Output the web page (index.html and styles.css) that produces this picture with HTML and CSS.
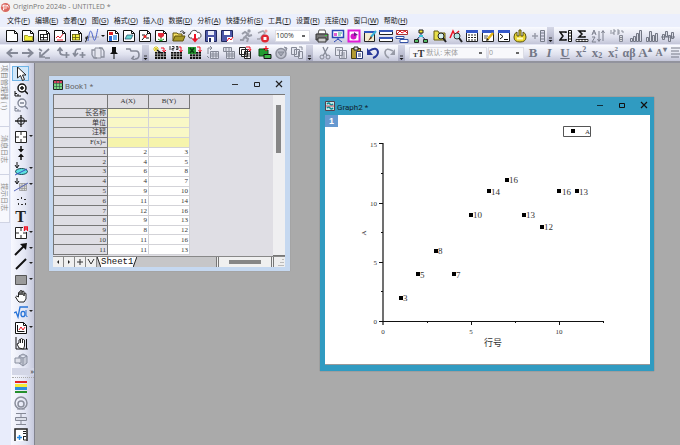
FILE: index.html
```html
<!DOCTYPE html>
<html lang="zh-CN">
<head>
<meta charset="utf-8">
<title>OriginPro 2024b - UNTITLED *</title>
<link rel="stylesheet" href="styles.css">
</head>
<body>
<svg class="defs" aria-hidden="true">
  <symbol id="page" viewBox="0 0 14 14"><path d="M1.500 1.500h8l3 3v8h-11z" fill="#fff" stroke="#111"/><path d="M9.500 1.500v3h3" fill="none" stroke="#111"/></symbol>
  <symbol id="drop" viewBox="0 0 5 14"><path d="M1 6h4l-2 2z" fill="#111"/></symbol>
  <symbol id="calendar" viewBox="0 0 14 14"><path d="M1.500 2.500h11v10h-11z" fill="#fff" stroke="#222"/><path d="M1 1h12v3H1z" fill="#3457c8"/></symbol>
  <symbol id="sheet" viewBox="0 0 14 14"><path d="M2 6h11v7H2z" fill="#111"/><path d="M2 8h11M2 10.500h11M4.500 6v7M7.500 6v7M10.500 6v7" stroke="#bbb" stroke-width=".7"/></symbol>
  <symbol id="graysheet" viewBox="0 0 14 14"><path d="M4.500 5.500h8v7h-8zM4.500 8h8M4.500 10h8M7 5.500v7M10 5.500v7" fill="#dfe1ec" stroke="#858996"/></symbol>
  <symbol id="grip" viewBox="0 0 7 17"><path d="M2 11h3" stroke="#111" stroke-width=".8"/><path d="M1.500 13h4l-2 2z" fill="#111"/></symbol>
  <symbol id="target" viewBox="0 0 14 14"><path d="M1.500 1.500h11v11h-11z" fill="#fff" stroke="#222"/><path d="M7 1v4M7 9v4M1 7h4M9 7h4" stroke="#222"/><path d="M5 5h4v4H5z" fill="#fff"/></symbol>
</svg>

<header class="titlebar">
  <svg class="logo" viewBox="0 0 12 12"><circle cx="6" cy="6" r="5" fill="#d9685f"/><path d="M3 9L9 3M2 5c3-3 6-1 8 1M4 3v6" stroke="#fff" fill="none"/><circle cx="6" cy="6" r="2" fill="#f4aaa2"/></svg>
  <h1>OriginPro 2024b - UNTITLED *</h1>
</header>

<nav class="menubar">
  <a href="#">文件(<u>F</u>)</a><a href="#">编辑(<u>E</u>)</a><a href="#">查看(<u>V</u>)</a><a href="#">图(<u>G</u>)</a><a href="#">格式(<u>O</u>)</a><a href="#">插入(<u>I</u>)</a><a href="#">数据(<u>D</u>)</a><a href="#">分析(<u>A</u>)</a><a href="#">快捷分析(<u>S</u>)</a><a href="#">工具(<u>T</u>)</a><a href="#">设置(<u>R</u>)</a><a href="#">连接(<u>N</u>)</a><a href="#">窗口(<u>W</u>)</a><a href="#">帮助(<u>H</u>)</a>
</nav>

<div class="toolbar" role="toolbar" aria-label="标准">
  <button aria-label="新建项目"><svg viewBox="0 0 14 14"><use href="#page"/></svg></button>
  <button aria-label="新建文件夹"><svg viewBox="0 0 14 14"><use href="#page"/><path d="M3.500 6.500h3l1 1h4v4h-8z" fill="#f2ee3c" stroke="#8a8410" stroke-width=".8"/></svg></button>
  <button aria-label="新建工作簿"><svg viewBox="0 0 14 14"><use href="#page"/><path d="M3 5.500h8M3 8.500h8M3 11h8M3.500 5v6M6.500 5v6M10.500 5v6" stroke="#111" stroke-width=".9"/></svg></button>
  <button aria-label="新建图"><svg viewBox="0 0 14 14"><use href="#page"/><path d="M3 9l2-2 2 2 3-4M4 11h6" fill="none" stroke="#e02030"/></svg></button>
  <button aria-label="新建矩阵"><svg viewBox="0 0 14 14"><use href="#page"/><path d="M3 5h8v6H3z" fill="#f4ee40"/><path d="M3 5.500h8M3 8.500h8M3 11h8M3.500 5v6M6.500 5v6M10.500 5v6" stroke="#5b5810" stroke-width=".8"/></svg></button>
  <button aria-label="新建函数图"><svg viewBox="0 0 14 14"><path d="M0 8h14" stroke="#aaa"/><path d="M3 12c2-13 3-12 5-4s3 0 5-9" fill="none" stroke="#4a62ca"/><path d="M0 13c2 0 1-6 3-6M0 9h3" fill="none" stroke="#111"/></svg></button>
  <button class="drop" aria-label="函数选项"><svg viewBox="0 0 5 14"><use href="#drop"/></svg></button>
  <button aria-label="新建布局"><svg viewBox="0 0 14 14"><use href="#page"/><path d="M3 3h4v3H3z" fill="#d22"/><path d="M3 7h3v5H3z" fill="#2865d0"/><path d="M7 6h4v5H7z" fill="#6aaee8"/></svg></button>
  <button aria-label="新建备注"><svg viewBox="0 0 14 14"><use href="#page"/><path d="M3 10l2-4h6l-2 4z" fill="#69d6d1" stroke="#246" stroke-width=".7"/></svg></button>
  <button aria-label="数字化"><svg viewBox="0 0 14 14"><use href="#page"/><path d="M4 11l6-7M4 6h3M8 9h3" stroke="#111"/><circle cx="7" cy="7.500" r="1.500" fill="#e22"/></svg></button>
  <button class="gap2" aria-label="新建图像"><svg viewBox="0 0 14 14"><use href="#page"/><path d="M7 8v4M4 10l3 2 3-2" stroke="#169a22" fill="none"/><path d="M4 4h6v3L7 9 4 7z" fill="#e02b3b"/></svg></button>
  <button aria-label="打开"><svg viewBox="0 0 14 14"><path d="M1 12V4h4l1 1h4v2" fill="#f4df65" stroke="#61530a"/><path d="M1 12l2-5h10l-2 5z" fill="#a99a28" stroke="#61530a"/><path d="M8 3c2-2 4-1 4 1M10.500 3L12 5l1-2" fill="none" stroke="#111" stroke-width=".8"/></svg></button>
  <button aria-label="从云打开"><svg viewBox="0 0 14 14"><path d="M4 9H2.500a2 2 0 010-4c0-4 6-5 7-1.500 3-1 5 4 2 5.500H10" fill="#fff" stroke="#444"/><path d="M7 5v6" stroke="#e12" stroke-width="2"/><path d="M3.500 9.500h7L7 13.500z" fill="#e12"/></svg></button>
  <button aria-label="保存"><svg viewBox="0 0 14 14"><path d="M1.500 1.500h11v11h-11z" fill="#4d58a8" stroke="#20285e"/><path d="M4 2h6v4H4z" fill="#e9ebf8"/><path d="M4 8h6v5H4z" fill="#fff"/><path d="M5 9h2v4H5z" fill="#20285e"/></svg></button>
  <button class="gap3" aria-label="保存模板"><svg viewBox="0 0 14 14"><path d="M1.500 1.500h11v11h-11z" fill="#4d58a8" stroke="#20285e"/><path d="M4 2h6v4H4zM7 8h6v5H7z" fill="#fff"/><path d="M7 12l2-3 2 2 2-3" stroke="#e12" fill="none"/></svg></button>
  <button aria-label="运行脚本"><svg viewBox="0 0 14 14"><circle cx="10" cy="2" r="1.700" fill="#999ca8"/><path d="M3 5l3-2 3 2-3 3 3 2-1 3M5.500 8L4 11H1M8 5l2 2 3-1" fill="none" stroke="#999ca8" stroke-width="2"/></svg></button>
  <button class="wide gap3" aria-label="停止运行"><svg viewBox="0 0 14 14"><path d="M2 4l5-2 2 2-3 3M6 7l-2 3H1" fill="none" stroke="#a2a4ae" stroke-width="1.500"/><circle cx="10" cy="2" r="1.500" fill="#e9a0a0"/><circle cx="9" cy="9.500" r="4" fill="#df2632"/><path d="M7.500 8h3v3h-3z" fill="#fff"/></svg></button>
  <select class="zoom" aria-label="缩放"><option>100%</option></select>
  <button aria-label="打印"><svg viewBox="0 0 14 14"><path d="M4 1h6l1 4H3z" fill="#fff" stroke="#555"/><path d="M1 5h12v6H1z" fill="#777" stroke="#333"/><path d="M3 9h8v4H3z" fill="#ccc" stroke="#333"/><path d="M10 6.500h2" stroke="#3d3"/></svg></button>
  <button aria-label="幻灯片放映"><svg viewBox="0 0 14 14"><path d="M1.500 1.500h11v7h-11z" fill="#fff" stroke="#2946b5" stroke-width="1.500"/><path d="M3 4h3v3H3z" fill="#e25ad0"/><path d="M7 4h4M7 6h3" stroke="#3a8"/><path d="M7 9v2M3 13l4-3 4 3" fill="none" stroke="#2946b5"/></svg></button>
  <button aria-label="图像捕获"><svg viewBox="0 0 14 14"><path d="M1.500 1.500h11v11h-11z" fill="#fff" stroke="#e11ad7" stroke-width="2"/><circle cx="6.500" cy="7.500" r="3" fill="#d416c8"/><path d="M7 7V3l4 3z" fill="#6a1d88"/></svg></button>
  <button aria-label="编辑模式"><svg viewBox="0 0 14 14"><path d="M1.500 2.500h10v10h-10z" fill="#f3ecd0" stroke="#222"/><path d="M1 2h11v2H1z" fill="#2f56bd"/><path d="M13 2L8 8" stroke="#3ab0d8" stroke-width="2"/><path d="M8 7l1 2-4 3z" fill="#622b10"/></svg></button>
  <button aria-label="平铺窗口"><svg viewBox="0 0 14 14"><path d="M.500 1.500h13v4H.500zM.500 8.500h13v4H.500z" fill="#fff" stroke="#222"/><path d="M0 1h14v2H0zM0 8h14v2H0z" fill="#3655b5"/></svg></button>
  <button class="gap3" aria-label="合并图"><svg viewBox="0 0 14 14"><path d="M1.500 1.500h11v4h-11z" fill="#fff" stroke="#a33"/><path d="M2 5l3-3 2 2 3-2 2 2" stroke="#e12" fill="none"/><path d="M1 7.500h8v2H1zM5 10.500h8v3H5z" fill="#fff" stroke="#3552a5"/></svg></button>
  <button class="gap3" aria-label="项目管理器"><svg viewBox="0 0 14 14"><path d="M7 3v5M2.500 11l4.500-5 4.500 5" fill="none" stroke="#126"/><path d="M5 1h4v3H5z" fill="#f5e637" stroke="#222"/><path d="M5 6h4v2H5z" fill="#39c4d8"/><path d="M.500 10.500h4v3h-4zM9.500 10.500h4v3h-4z" fill="#5b6" stroke="#222"/></svg></button>
  <button aria-label="查找文件"><svg viewBox="0 0 14 14"><path d="M1 11V2h4l1 2h6v7z" fill="#e8e04a" stroke="#665e12"/><circle cx="8" cy="7" r="3" fill="#d8f0ee" stroke="#222"/><path d="M10 9l3 4" stroke="#222" stroke-width="2"/></svg></button>
  <button aria-label="查找图"><svg viewBox="0 0 14 14"><path d="M1 9l3-7 2 4 4-4" fill="none" stroke="#e12" stroke-width="1.500"/><circle cx="8" cy="7" r="3" fill="#b6e9e9" stroke="#333"/><path d="M10 9l3 4" stroke="#222" stroke-width="2"/></svg></button>
  <button aria-label="结果日志"><svg viewBox="0 0 14 14"><use href="#calendar"/><path d="M3 6h8M3 8.500h8M3 11h8" stroke="#222" stroke-dasharray="2 1"/></svg></button>
  <button aria-label="代码编辑器"><svg viewBox="0 0 14 14"><use href="#calendar"/><path d="M3 7h4M3 9h3" stroke="#555"/><path d="M12 4l-6 7" stroke="#e5b616" stroke-width="2.500"/><path d="M5 12l1-3 2 2z" fill="#222"/></svg></button>
  <button aria-label="命令窗口"><svg viewBox="0 0 14 14"><use href="#calendar"/><path d="M3 5l3 2.500L3 10M7 10.500h4" fill="none" stroke="#111"/></svg></button>
  <button aria-label="应用" class="gap3"><svg viewBox="0 0 14 14"><path d="M1 8q0-4 3-5v4h2V1h2v6h2V3q3 1 3 5 0 5-6 5T1 8z" fill="#ead632" stroke="#5b520d"/><path d="M4 9.500h6" stroke="#fffac0" stroke-width="2"/></svg></button>
  <button aria-label="添加列"><svg viewBox="0 0 14 14"><path d="M0 7h6M3 4v6" stroke="#9a9daa" stroke-width="1.500"/><path d="M8.500 1.500h4v11h-4zM8 4h5M8 7h5M8 10h5" fill="#dde" stroke="#777c89"/></svg></button>
  <button class="grip end" aria-label="工具栏选项"><svg viewBox="0 0 7 17"><use href="#grip"/></svg></button>
  <button aria-label="列统计"><svg viewBox="0 0 14 14"><path d="M7 4V3H1l3 4-3 4h6v-1" fill="none" stroke="#111" stroke-width="1.500"/><path d="M9.500 1.500h3v11h-3zM9 4h4M9 7h4M9 10h4" fill="#fff" stroke="#111"/></svg></button>
  <button aria-label="行统计"><svg viewBox="0 0 14 14"><path d="M10 3V2H4l3 3-3 3h6V7" fill="none" stroke="#111" stroke-width="1.500"/><path d="M1 10.500h12v2H1zM4 10v3M7 10v3M10 10v3" fill="#fff" stroke="#111" stroke-width=".8"/></svg></button>
  <button class="gap3" aria-label="排序"><svg viewBox="0 0 14 14"><path d="M1 6l2-5 2 5M1.500 4h3M1 8h3L1 13h4M8 2v10M6.500 10L8 12.500 9.500 10M12 12V2M10.500 4L12 1.500 13.500 4" fill="none" stroke="#7d808e"/></svg></button>
  <button class="gap3" aria-label="设置列值"><svg viewBox="0 0 14 14"><path d="M1 1v4M3 1h2v2H3v2h2M7 1h2v4H7M7 3h2M11 2h2v2" fill="none" stroke="#777b88" stroke-width=".8"/><path d="M9.500 6.500h3v6h-3zM9 8.500h4M9 10.500h4" fill="#ddd" stroke="#858996"/></svg></button>
  <button aria-label="升序柱"><svg viewBox="0 0 14 14"><path d="M1.500 9.500h2v3h-2zM4.500 7.500h2v5h-2zM7.500 4.500h2v8h-2zM10.500 1.500h2v11h-2z" fill="#d9dbe6" stroke="#737784"/></svg></button>
  <button aria-label="直方图"><svg viewBox="0 0 14 14"><path d="M1.500 8.500h2v4h-2zM4.500 2.500h2v10h-2zM7.500 6.500h2v6h-2zM10.500 4.500h2v8h-2z" fill="#d9dbe6" stroke="#737784"/></svg></button>
  <button aria-label="正负柱图"><svg viewBox="0 0 14 14"><path d="M1.500 5.500h2v5h-2zM4.500 2.500h2v5h-2zM7.500 6.500h2v6h-2zM10.500 3.500h2v6h-2zM0 8h14" fill="#d9dbe6" stroke="#737784"/></svg></button>
</div>

<div class="toolbar second" role="toolbar" aria-label="编辑与格式">
  <button aria-label="后退"><svg viewBox="0 0 14 14"><path d="M13 7H3M7 3L2.500 7 7 11" fill="none" stroke="#858997" stroke-width="2"/></svg></button>
  <button aria-label="前进"><svg viewBox="0 0 14 14"><path d="M1 7h10M7 3l4.500 4L7 11" fill="none" stroke="#858997" stroke-width="2"/></svg></button>
  <button class="gap3" aria-label="清除导航"><svg viewBox="0 0 14 14"><path d="M12 3L3 11M3 6v5h5M2 3l3 2M8 12h5" fill="none" stroke="#858997" stroke-width="1.700"/></svg></button>
  <button aria-label="向上添加"><svg viewBox="0 0 14 14"><path d="M4 2v4q0 3 4 3M1.500 5L4 2l2.500 3M10.500 6v6M7.500 9h6" fill="none" stroke="#858997" stroke-width="1.700"/></svg></button>
  <button class="gap3" aria-label="向下添加"><svg viewBox="0 0 14 14"><path d="M9 3H6Q3 3 3 9M1 7l2 3 3-3M10.500 6v6M7.500 9h6" fill="none" stroke="#858997" stroke-width="1.700"/></svg></button>
  <button aria-label="刷新"><svg viewBox="0 0 14 14"><path d="M4 2h6v10H4z" fill="#e5e6ef" stroke="#8b8f9c"/><path d="M1 9V4h3M13 5v6h-3M1 9l2 3h3M13 5l-2-3H8" fill="none" stroke="#8b8f9c" stroke-width="1.300"/></svg></button>
  <button class="gap3" aria-label="固定"><svg viewBox="0 0 14 14"><path d="M5 1h4v5l2 2H3l2-2zM6.500 8h1v5h-1z" fill="#111"/></svg></button>
  <button class="gap1" aria-label="返回上级"><svg viewBox="0 0 14 14"><path d="M0 3h4l1 2h5q3 0 3 4t-4 4M8 10l-2 2.500L9 14" fill="none" stroke="#858997" stroke-width="1.600"/></svg></button>
  <button class="grip" aria-label="工具栏选项"><svg viewBox="0 0 7 17"><use href="#grip"/></svg></button>
  <button aria-label="导入向导"><svg viewBox="0 0 14 14"><use href="#sheet"/><path d="M3 0v6M0 3h6M1 1l4 4M5 1L1 5" stroke="#dbc820"/><path d="M4 4l4 3" stroke="#111" stroke-width="1.500"/><path d="M8 2h3v3M9.500 4L11 6l2-2" fill="none" stroke="#e12"/></svg></button>
  <button class="gap3" aria-label="导入单个 ASCII"><svg viewBox="0 0 14 14"><use href="#sheet"/><path d="M1 0v4M3 .500h2v2H3v1.500h2M7 .500h2v3H7M7 2h2" fill="none" stroke="#111" stroke-width=".8"/><path d="M10 1h2v4M10.500 4L12 6l1.500-2" fill="none" stroke="#e12"/></svg></button>
  <button class="gap2" aria-label="导入 Excel"><svg viewBox="0 0 14 14"><use href="#sheet"/><path d="M0 1h8v7H0z" fill="#299a34"/><path d="M2 2l4 5M6 2L2 7" stroke="#063b0c" stroke-width="1.500"/><path d="M9 1h3v4M10.500 4L12 6l1.500-2" fill="none" stroke="#e12"/></svg></button>
  <button aria-label="重新导入"><svg viewBox="0 0 14 14"><use href="#graysheet"/><path d="M2 8V2h4M4 0l2 2-2 2M1 10l2 2" fill="none" stroke="#858996"/></svg></button>
  <button aria-label="导入数据"><svg viewBox="0 0 14 14"><use href="#graysheet"/><path d="M1.500 1.500h8v4h-8zM4 1v4M7 1v4" fill="#dfe1ec" stroke="#858996"/></svg></button>
  <button class="gap4" aria-label="批处理"><svg viewBox="0 0 14 14"><path d="M1.500 1.500h6v7h-6zM3.500 3.500h6v7h-6zM6.500 5.500h6v7h-6z" fill="#fff" stroke="#222"/><path d="M7 8h5M7 10h5M9 6v6" stroke="#222" stroke-width=".8"/><path d="M8 1h4v3M10 3l2 2 1-2" stroke="#e12" fill="none"/></svg></button>
  <button aria-label="添加新列"><svg viewBox="0 0 14 14"><path d="M1 3h5l1 1h3v6H1z" fill="#229b30" stroke="#0b4a12"/><path d="M6 8.500h7v4H6z" fill="#40b84b" stroke="#111"/><path d="M8 0v5M5.500 2.500h5" stroke="#e12" stroke-width="1.200"/></svg></button>
  <button aria-label="重新计算"><svg viewBox="0 0 14 14"><circle cx="7" cy="7.500" r="5" fill="#bfc1cd" stroke="#8c8f9c" stroke-width="1.500"/><path d="M4 6h6l-3 4zM10 1l3 1-1 3" fill="#a3a6b3" stroke="#858996"/></svg></button>
  <button class="gap1" aria-label="复制列"><svg viewBox="0 0 14 14"><path d="M1.500 1.500h5v7h-5zM4.500 3.500h5v7h-5zM8.500 5.500h4v7h-4z" fill="#e3e5ef" stroke="#858996"/><path d="M9 1h3v3" stroke="#858996" fill="none"/></svg></button>
  <button class="grip end" aria-label="工具栏选项"><svg viewBox="0 0 7 17"><use href="#grip"/></svg></button>
  <button aria-label="剪切"><svg viewBox="0 0 14 14"><path d="M5 1l4 9M10 1L5 10" stroke="#858996" stroke-width="1.300"/><circle cx="4" cy="11" r="2" fill="none" stroke="#858996"/><circle cx="10" cy="11" r="2" fill="none" stroke="#858996"/></svg></button>
  <button aria-label="复制"><svg viewBox="0 0 14 14"><path d="M1.500 1.500h7v8h-7zM5.500 4.500h7v8h-7zM7 7h4M7 9h4M7 11h4M3 4h3" fill="#e7e8f1" stroke="#858996"/></svg></button>
  <button aria-label="粘贴"><svg viewBox="0 0 14 14"><path d="M1.500 2.500h9v10h-9z" fill="#b29b32" stroke="#443b11"/><path d="M4 1h4v3H4z" fill="#ddd" stroke="#222"/><path d="M6.500 5.500h6v7h-6zM8 8h3M8 10h3" fill="#fff" stroke="#24346e"/></svg></button>
  <button aria-label="撤销"><svg viewBox="0 0 14 14"><path d="M3 5q8-5 9 1 0 4-5 6" fill="none" stroke="#29399a" stroke-width="2"/><path d="M1 2v7h6z" fill="#29399a"/></svg></button>
  <button class="gap1" aria-label="重做"><svg viewBox="0 0 14 14"><path d="M11 5Q4 1 3 6q0 4 4 6" fill="none" stroke="#989ba7" stroke-width="1.600"/><path d="M13 3v6H8z" fill="#989ba7"/></svg></button>
  <button class="grip end" aria-label="工具栏选项"><svg viewBox="0 0 7 17"><use href="#grip"/></svg></button>
  <label class="fontbox"><b><small>T</small>T</b><select aria-label="字体"><option>默认: 宋体</option></select></label>
  <select class="sizebox" aria-label="字号"><option>0</option></select>
  <button class="fmt"><b>B</b></button><button class="fmt"><i>I</i></button><button class="fmt"><u>U</u></button><button class="fmt">x<sup>2</sup></button><button class="fmt">x<sub>2</sub></button><button class="fmt">x<span class="stack"><span>2</span><span>1</span></span></button><button class="fmt greek">αβ</button><button class="fmt">A<sup>▴</sup></button><button class="fmt small">A<sup>▾</sup></button>
  <button aria-label="对齐"><svg viewBox="0 0 14 14"><path d="M1 2h12M1 5h8M1 8h12M1 11h8" stroke="#777b88"/></svg></button>
</div>

<main class="workspace">
  <aside class="docks">
    <button class="dock long">项目管理器 (1)</button>
    <button class="dock">消息日志</button>
    <button class="dock">提示日志</button>
  </aside>

  <div class="tools" role="toolbar" aria-label="工具">
    <div class="group">
      <button class="on" aria-label="指针"><svg viewBox="0 0 14 14"><path d="M3.500 0v11l3-2.500 2 5 2-1-2-4.500h3.500z" fill="#fff" stroke="#222"/></svg></button>
      <button aria-label="放大"><svg viewBox="0 0 14 14"><circle cx="8" cy="5" r="4" fill="#fff" stroke="#111" stroke-width="1.500"/><path d="M8 3v4M6 5h4M11 8l3 3" stroke="#111" stroke-width="1.500"/><path d="M1 8v5h6M1 10.500h2M4 13v-2" fill="none" stroke="#111"/></svg></button>
    </div>
    <div class="group">
      <button aria-label="缩小"><svg viewBox="0 0 14 14"><circle cx="8" cy="5" r="4" fill="#f4f5fa" stroke="#7c8293" stroke-width="1.300"/><path d="M6 5h4M11 8l3 3" stroke="#7c8293" stroke-width="1.500"/><path d="M1 8v5h6M1 10.500h2M4 13v-2" fill="none" stroke="#7c8293"/></svg></button>
      <button aria-label="屏幕读取"><svg viewBox="0 0 14 14"><circle cx="7" cy="7" r="3.500" fill="none" stroke="#222"/><path d="M7 1v12M1 7h12" stroke="#222" stroke-width="1.300"/></svg></button>
      <button class="more" aria-label="数据读取"><svg viewBox="0 0 14 14"><use href="#target"/></svg></button>
      <button aria-label="数据选择"><svg viewBox="0 0 14 14"><path d="M7 0v3M7 14v-3" stroke="#111" stroke-width="1.500"/><path d="M4 3h6L7 6.500zM4 11h6L7 7.500z" fill="#111"/></svg></button>
      <button class="more" aria-label="区域选择"><svg viewBox="0 0 14 14"><ellipse cx="7.500" cy="9.500" rx="6" ry="3" fill="#5de1e1" stroke="#164b55"/><path d="M1 13L13 7" stroke="#3552c0"/><path d="M3 0v5M1 3l2 3 2-3" stroke="#111" fill="none"/></svg></button>
      <button class="more" aria-label="屏蔽点"><svg viewBox="0 0 14 14"><path d="M5.500 5.500h7v7h-7zM5 8h8M5 10.500h8M8 5v8M10.500 5v8" fill="#ddd" stroke="#999" stroke-width=".8"/><path d="M0 13L14 5" stroke="#5967bc"/><path d="M3 0v5M1 3l2 3 2-3" stroke="#111" fill="none"/></svg></button>
      <button aria-label="绘制数据"><svg viewBox="0 0 14 14"><path d="M3 5h2v1H3zM7 3h1v2H7zM10 5h2v1h-2zM4 9h1v2H4zM7 10h2v1H7zM11 9h1v2h-1z" fill="#333"/></svg></button>
      <button aria-label="文本" class="text">T</button>
      <button class="more" aria-label="注释"><svg viewBox="0 0 14 14"><use href="#target"/><path d="M9 0h5v6H9z" fill="#eceffa"/><path d="M10.500 5V1h3v4M10.500 3h3" fill="none" stroke="#e12" stroke-width="1.300"/></svg></button>
      <button class="more" aria-label="箭头"><svg viewBox="0 0 14 14"><path d="M1 13L10 4" stroke="#111" stroke-width="2"/><path d="M6 2l7-1-1 7z" fill="#111"/></svg></button>
    </div>
    <div class="group">
      <button class="more" aria-label="直线"><svg viewBox="0 0 14 14"><path d="M2 12L12 2" stroke="#111" stroke-width="2"/></svg></button>
      <button class="more" aria-label="矩形"><svg viewBox="0 0 14 14"><path d="M1.500 2.500h11v9h-11z" fill="#9b9b9b" stroke="#555"/></svg></button>
      <button aria-label="平移"><svg viewBox="0 0 14 14"><path d="M4 12L1.500 8q1-2 3 0V3.500q1-1 1.500 0V6 2q1-1 2 0v4-3.500q1-1 2 0V7 4.500q1-1 2 0V10l-2 3H5z" fill="#fff" stroke="#222"/></svg></button>
      <button class="more" aria-label="公式"><svg viewBox="0 0 14 14"><path d="M0 8l2-1 2 5 2-10h8" fill="none" stroke="#2874d8" stroke-width="1.300"/><ellipse cx="9" cy="9" rx="2" ry="2.700" fill="none" stroke="#2874d8" stroke-width="1.300"/><path d="M12 5v6l1.500.500" fill="none" stroke="#2874d8"/></svg></button>
      <button class="more" aria-label="插入图"><svg viewBox="0 0 14 14"><use href="#page"/><path d="M3.500 4v6.500h7" fill="none" stroke="#111"/><path d="M5 9l2-3 2 3 2-3" fill="none" stroke="#e12"/></svg></button>
      <button aria-label="重新缩放"><svg viewBox="0 0 14 14"><path d="M2 0v12h12M12.500 2v10" stroke="#111" fill="none"/><path d="M5 11L3 7l2-1V3q1-1 1.500 0V6 2q1-1 2 0v4-3q1-1 2 0v6l-1 3z" fill="#fff" stroke="#222"/></svg></button>
      <button aria-label="三维旋转"><svg viewBox="0 0 14 14"><path d="M5 3l4-2 4 2v7l-4 3-4-3zM5 3l4 2 4-2M9 5v8" fill="#c4c8d4" stroke="#8a90a0"/><path d="M1 5h6v5H1z" fill="#dfe1ea" stroke="#8a90a0"/></svg></button>
    </div>
    <button class="toolgrip" aria-label="工具栏选项">»</button>
    <div class="group lower">
      <button aria-label="颜色"><svg viewBox="0 0 14 14"><path d="M1 1h12v2H1z" fill="#e22727"/><path d="M1 4h12v3H1z" fill="#f7ec36"/><path d="M1 7h12v3H1z" fill="#2e8ddf"/><path d="M1 11h12v2H1z" fill="#25902d"/></svg></button>
      <button aria-label="气泡图例"><svg viewBox="0 0 14 14"><circle cx="7" cy="7" r="6" fill="none" stroke="#8b8f9c" stroke-width="1.500"/><circle cx="7" cy="8" r="3" fill="none" stroke="#8b8f9c" stroke-width="1.500"/><path d="M3 13h3M8 13h3" stroke="#8b8f9c"/></svg></button>
      <button aria-label="比例尺"><svg viewBox="0 0 14 14"><path d="M2 1.500h10M2 12.500h10M7 1v12" stroke="#858996"/><path d="M1.500 5.500h11v3h-11z" fill="#dde0ea" stroke="#858996"/></svg></button>
      <button aria-label="添加标尺"><svg viewBox="0 0 14 14"><path d="M1 13V1h12v12" fill="#fff" stroke="#222" stroke-width="1.500"/><path d="M3 9.500h5M5.500 7v5" stroke="#2688df" stroke-width="1.500"/><path d="M9 3.500h3M9 5.500h3M9 8.500h3M9.500 8v4h3" stroke="#222" fill="none"/></svg></button>
      <button aria-label="日期"><svg viewBox="0 0 14 14"><path d="M2 2h4M8 2h4" stroke="#333"/></svg></button>
    </div>
  </div>

  <section class="canvas">
    <article class="window book">
      <header>
        <svg viewBox="0 0 10 10"><path d="M.500.500h9v9h-9z" fill="#7cd986" stroke="#222"/><path d="M1 1h8v2H1z" fill="#dc4265"/><path d="M0 3.500h10M0 6.500h10M3.500 0v10M6.500 0v10" stroke="#314f42" stroke-width=".6"/></svg>
        <h2>Book1 *</h2>
        <button aria-label="最小化"><svg viewBox="0 0 10 10"><path d="M2 4.500h6" stroke="#333"/></svg></button>
        <button aria-label="最大化"><svg viewBox="0 0 10 10"><path d="M2.500 2.500h5v4h-5z" fill="none" stroke="#222"/></svg></button>
        <button aria-label="关闭"><svg viewBox="0 0 10 10"><path d="M2 1l6 6M8 1L2 7" stroke="#222" stroke-width="1.200"/></svg></button>
      </header>
      <div class="sheet">
        <div class="grid">
          <table>
            <colgroup><col class="rowhead"><col><col></colgroup>
            <thead><tr><th></th><th>A(X)</th><th>B(Y)</th></tr></thead>
            <tbody>
              <tr class="meta"><th>长名称</th><td></td><td></td></tr>
              <tr class="meta"><th>单位</th><td></td><td></td></tr>
              <tr class="meta"><th>注释</th><td></td><td></td></tr>
              <tr class="meta formula"><th>F(x)=</th><td></td><td></td></tr>
              <tr><th>1</th><td>2</td><td>3</td></tr>
              <tr><th>2</th><td>4</td><td>5</td></tr>
              <tr><th>3</th><td>6</td><td>8</td></tr>
              <tr><th>4</th><td>4</td><td>7</td></tr>
              <tr><th>5</th><td>9</td><td>10</td></tr>
              <tr><th>6</th><td>11</td><td>14</td></tr>
              <tr><th>7</th><td>12</td><td>16</td></tr>
              <tr><th>8</th><td>9</td><td>13</td></tr>
              <tr><th>9</th><td>8</td><td>12</td></tr>
              <tr><th>10</th><td>11</td><td>16</td></tr>
              <tr><th>11</th><td>11</td><td>13</td></tr>
            </tbody>
          </table>
          <div class="vscroll"><div class="thumb"></div></div>
        </div>
        <footer>
          <button aria-label="上一张"><svg viewBox="0 0 10 10"><path d="M6 3v4L4 5z" fill="#222"/></svg></button>
          <button aria-label="下一张"><svg viewBox="0 0 10 10"><path d="M4 3v4l2-2z" fill="#222"/></svg></button>
          <button aria-label="添加"><svg viewBox="0 0 10 10"><path d="M5 2v6M2 5h6" stroke="#333"/></svg></button>
          <button aria-label="列表"><svg viewBox="0 0 10 10"><path d="M2 2l3 5 3-5" fill="none" stroke="#333"/></svg></button>
          <div class="tabs">
            <svg class="slant" viewBox="0 0 4 11"><path d="M0 0h4v11z" fill="#fff"/><path d="M0 0l4 11" stroke="#111"/></svg>
            <button class="tab">Sheet1</button>
            <svg class="slant" viewBox="0 0 4 11"><path d="M0 0h4L0 11z" fill="#fff"/><path d="M4 0L0 11" stroke="#111"/></svg>
          </div>
          <div class="hscroll"><div class="thumb"></div></div>
          <svg class="corner" viewBox="0 0 10 10"><path d="M8 2h1v1H8zM6 5h1v1H6zM8 5h1v1H8zM4 8h1v1H4zM6 8h1v1H6zM8 8h1v1H8z" fill="#888"/></svg>
        </footer>
      </div>
    </article>

    <article class="window graph">
      <header>
        <svg viewBox="0 0 10 10"><path d="M.500.500h9v9h-9z" fill="#bfe8e8" stroke="#543f4c"/><path d="M2 3q2-2 3 0t3 0M2 7q2-2 3 0t3 0" fill="none" stroke="#0a8790" stroke-width="1.500"/><path d="M1 5h8" stroke="#df5260"/></svg>
        <h2>Graph2 *</h2>
        <button aria-label="最小化"><svg viewBox="0 0 10 10"><path d="M2 4.500h6" stroke="#12303c"/></svg></button>
        <button aria-label="最大化"><svg viewBox="0 0 10 10"><path d="M2.500 2.500h5v4h-5z" fill="none" stroke="#111"/></svg></button>
        <button aria-label="关闭"><svg viewBox="0 0 10 10"><path d="M2 1l6 6M8 1L2 7" stroke="#111" stroke-width="1.200"/></svg></button>
      </header>
      <div class="plot">
        <button class="layer">1</button>
        <svg class="chart" viewBox="325 115 325 249" role="img" aria-label="散点图">
          <path d="M383 143v182" stroke="#707070" stroke-width="2"/>
          <path d="M379 143.500h4M379 203.500h4M379 262.500h4M379 321.500h225M381 173.500h2M381 232.500h2M381 291.500h2M471.500 321v4M559.500 321v4M427.500 321v2M515.500 321v2M603.500 321v2" stroke="#111" fill="none"/>
          <path d="M563.500 126.500h27v10h-27z" fill="#fff" stroke="#555"/>
          <path d="M571 129h4v4h-4z"/>
          <g class="tick">
            <text x="590" y="134" text-anchor="end">A</text>
            <text x="377" y="147" text-anchor="end">15</text><text x="377" y="206" text-anchor="end">10</text><text x="377" y="265" text-anchor="end">5</text><text x="377" y="324" text-anchor="end">0</text>
            <text x="383" y="334" text-anchor="middle">0</text><text x="471" y="334" text-anchor="middle">5</text><text x="559" y="334" text-anchor="middle">10</text>
          </g>
          <text class="axis" x="493" y="346" text-anchor="middle">行号</text>
          <text class="tick-label" transform="translate(366 233) rotate(-90)" text-anchor="middle">A</text>
          <path d="M399 296h4v4h-4zM416 272h4v4h-4zM434 249h4v4h-4zM452 272h4v4h-4zM469 213h4v4h-4zM487 189h4v4h-4zM505 178h4v4h-4zM522 213h4v4h-4zM540 225h4v4h-4zM557 189h4v4h-4zM575 189h4v4h-4z"/>
          <g class="num">
            <text x="403" y="301">3</text><text x="420" y="278">5</text><text x="438" y="254">8</text><text x="456" y="278">7</text><text x="473" y="218">10</text><text x="491" y="195">14</text><text x="509" y="183">16</text><text x="526" y="218">13</text><text x="544" y="230">12</text><text x="562" y="195">16</text><text x="579" y="195">13</text>
          </g>
        </svg>
      </div>
    </article>
  </section>
</main>
</body>
</html>
```
FILE: styles.css
```css
* { box-sizing: border-box; }
body {
  margin: 0;
  min-height: 100vh;
  display: flex;
  flex-direction: column;
  overflow: hidden;
  background: #e8ecfb;
  font-family: "Open Sans", "Noto Sans CJK SC", sans-serif;
  font-size: 7px;
  color: #333;
}
button, select { font: inherit; color: inherit; border: 0; padding: 0; background: none; }
h1, h2 { margin: 0; font-weight: 400; }
svg { display: block; }
.defs { position: absolute; width: 0; height: 0; }

.titlebar { display: flex; align-items: center; gap: 2px; height: 14px; background: #f3f3f3; }
.titlebar h1 { font-size: 7px; line-height: 14px; color: #777; }
.logo { width: 11px; height: 11px; }

.menubar {
  display: flex;
  gap: 5px;
  height: 13px;
  padding-left: 7px;
  background: #ebeffc;
  font-family: "Liberation Sans", "Noto Sans CJK SC", sans-serif;
  line-height: 13px;
  white-space: nowrap;
}
.menubar a { color: #222; text-decoration: none; }

.toolbar {
  display: flex;
  flex-shrink: 0;
  align-items: center;
  height: 17px;
  padding-left: 4px;
  overflow: hidden;
  background: linear-gradient(#fafbff, #dfe1ee 60%, #c3c5d8);
}
.toolbar.second { height: 19px; border-bottom: 2px solid #92939d; border-top: 1px solid #e4e6f4; }
.toolbar button { flex: 0 0 16px; height: 16px; display: flex; align-items: center; justify-content: center; }
.toolbar svg { width: 14px; height: 14px; }
.toolbar .drop { flex-basis: 5px; }
.toolbar .drop svg { width: 5px; }
.toolbar .wide { flex-basis: 18px; }
.toolbar .gap1 { margin-right: 1px; }
.toolbar .gap2 { margin-right: 2px; }
.toolbar .gap3 { margin-right: 3px; }
.toolbar .gap4 { margin-right: 4px; }
.toolbar .grip { flex-basis: 7px; height: 17px; margin-right: 3px; background: linear-gradient(#d5d7e6, #a6a8be); }
.toolbar .grip svg { width: 7px; height: 17px; }
.toolbar .end { margin-right: 4px; }
.zoom, .fontbox, .sizebox {
  flex: 0 0 35px;
  height: 12px;
  border: 1px solid #dcdde6;
}
.toolbar select {
  appearance: none;
  font-size: 7px;
  line-height: 10px;
  color: #333;
  background: linear-gradient(#666, #666) right 4px center / 3px 2px no-repeat #fff;
}
.zoom { margin-right: 4px; }
.fontbox { flex-basis: 78px; margin-right: 1px; display: flex; align-items: center; background: #f8f8fb; }
.fontbox b { padding: 0 2px 0 3px; font: bold 10px "Liberation Serif", serif; color: #333; }
.fontbox small { font-size: 7px; }
.toolbar .fontbox select { flex: 1; height: 10px; background-color: #f8f8fb; color: #999; }
.toolbar .sizebox { flex-basis: 36px; margin-right: 1px; background-color: #f8f8fb; color: #999; }
.toolbar .fmt { font: bold 13px "Liberation Serif", serif; line-height: 16px; color: #747887; }
.fmt sup, .fmt sub { font-size: 8px; line-height: 8px; }
.fmt sup { align-self: flex-start; padding-top: 1px; }
.fmt sub { align-self: flex-end; padding-bottom: 1px; }
.stack { display: flex; flex-direction: column; font-size: 7px; line-height: 7px; }
.toolbar .greek { font-size: 12px; }
.toolbar .small { font-size: 10px; }

.workspace { flex: 1; display: flex; min-height: 0; }
.docks { flex: 0 0 11px; display: flex; flex-direction: column; align-items: flex-start; }
.dock {
  width: 10px;
  height: 48px;
  padding-top: 8px;
  border: 0 solid #d0d4e4;
  border-width: 0 1px 1px 0;
  background: #f7f8fd;
  color: #888;
  line-height: 9px;
  text-align: left;
  white-space: nowrap;
  writing-mode: vertical-rl;
  text-orientation: sideways;
}
.dock.long { height: 64px; padding-top: 2px; }

.tools {
  flex: 0 0 24px;
  padding: 3px 0 0 1px;
  background: linear-gradient(90deg, #f8f9ff, #e3e6f4 60%, #c6c9dc);
  border-right: 1px solid #83848e;
}
.group { display: flex; flex-direction: column; gap: 1px; }
.tools .group button { position: relative; width: 17px; height: 15px; display: flex; align-items: center; justify-content: center; }
.group svg { width: 14px; height: 14px; }
.tools .group .on { border: 1px solid #6fb4e6; background: #d2e8fa; }
.more::after {
  content: "";
  position: absolute;
  left: 17px;
  top: 6px;
  border: 2px solid transparent;
  border-top-color: #222;
  border-bottom: 0;
}
.tools .text { font: bold 16px "Liberation Serif", serif; line-height: 15px; color: #222; }
.toolgrip { display: block; width: 22px; height: 7px; margin: 1px 0 2px; background: #d3d6e6; line-height: 7px; text-align: right; color: #111; }
.lower { border-top: 1px dotted #aaa; padding-top: 1px; }

.canvas { flex: 1; position: relative; overflow: hidden; background: #aaa; }
.window { position: absolute; display: flex; flex-direction: column; }
.window header { display: flex; align-items: center; gap: 2px; height: 18px; margin-right: -4px; }
.window header svg { flex-shrink: 0; width: 10px; height: 10px; }
.window h2 { flex: 1; padding-top: 3px; font-family: Roboto, sans-serif; font-size: 8px; line-height: 12px; }
.window header button { width: 20px; height: 16px; display: flex; align-items: center; justify-content: center; }

.book { left: 14px; top: 13px; width: 241px; padding: 0 5px 4px 4px; background: #c5d8f0; box-shadow: 0 0 1px #888; }
.book h2 { color: #666; }
.sheet { border-top: 1px solid #777; background: #dfdee4; }
.grid { display: flex; justify-content: space-between; height: 161px; }
table { border-collapse: collapse; table-layout: fixed; width: 136px; height: 160px; font-family: "Liberation Serif", "Noto Sans CJK SC", serif; font-size: 7px; line-height: 8px; color: #333; }
col { width: 41px; }
.rowhead { width: 54px; }
th, td { padding: 0 1px; text-align: right; font-weight: 400; }
thead tr { height: 13px; }
thead th { text-align: center; border: 1px solid #777; border-top: 0; }
tbody th { border: 1px solid #777; }
tbody td { background: #fff; border: 1px solid #d3d3d8; }
.meta td { background: #f9f8c6; }
.formula td { background: #f6f4ac; }
.vscroll { width: 12px; padding: 10px 4px 0 3px; background: #efeff1; border-bottom: 1px solid #777; }
.vscroll .thumb { height: 48px; background: #868686; }
.sheet footer { display: flex; height: 11px; border-top: 1px solid #888; background: #c6c6c8; }
.sheet footer button { flex: 0 0 11px; border-right: 1px solid #888; background: #f0f0f0; }
.sheet footer svg { width: 10px; height: 10px; }
.tabs { flex: 1; display: flex; }
.sheet footer .slant { width: 4px; height: 10px; }
.sheet footer .tab { flex: 0 0 auto; border: 0; background: #fff; font: 9px "Liberation Mono", monospace; line-height: 10px; color: #111; }
.hscroll { width: 58px; padding: 3px 10px; border: 0 double #777; border-width: 0 3px; background: #f0f0f0; }
.hscroll .thumb { height: 4px; background: #868686; }
.sheet footer .corner { width: 11px; background: #eee; }

.graph { left: 285px; top: 34px; width: 334px; padding: 0 4px 6px 5px; background: #309bc1; box-shadow: 0 0 1px #666; }
.graph h2 { color: #10242e; }
.plot { position: relative; background: #fff; border-bottom: 1px solid #999; }
.chart { width: 100%; height: auto; }
.layer { position: absolute; left: 0; top: 0; width: 13px; height: 12px; background: #6699d0; color: #fff; font: bold 9px "Liberation Sans", sans-serif; }
.chart text { font-family: "Liberation Serif", "Noto Sans CJK SC", serif; fill: #333; }
.chart .tick text, .chart .tick-label { font-size: 7px; }
.chart .num text, .chart .axis { font-size: 9px; }
```
